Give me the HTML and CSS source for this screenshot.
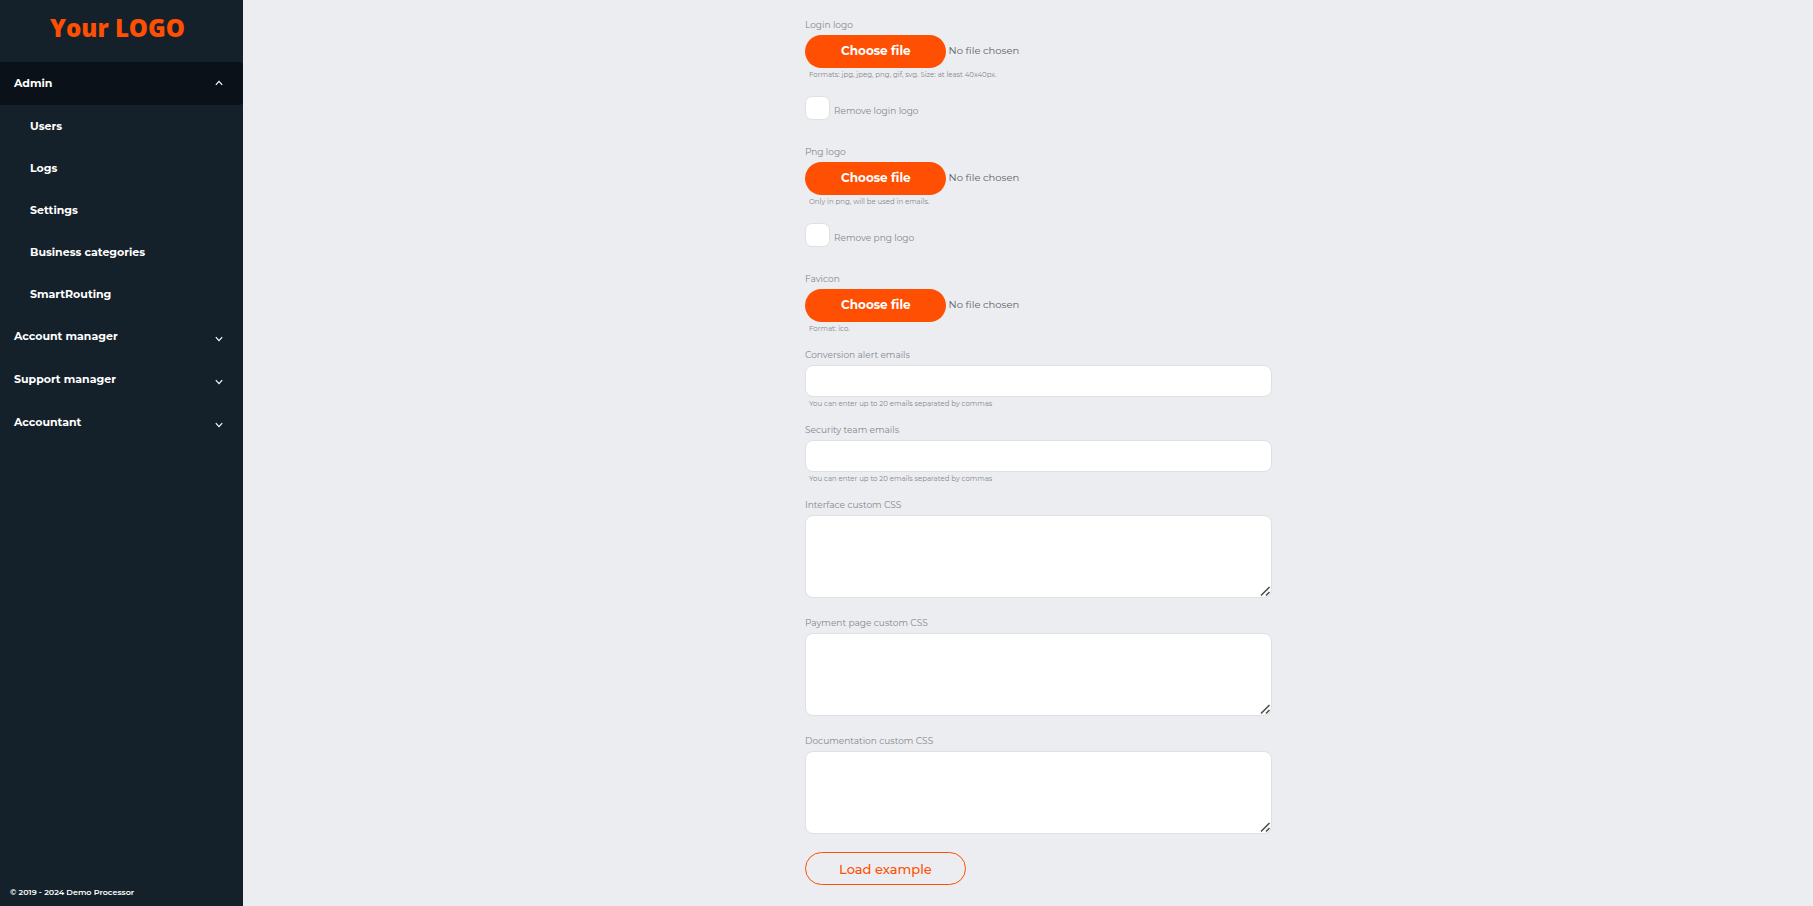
FILE: index.html
```html
<!DOCTYPE html>
<html lang="en">
<head>
    <meta charset="UTF-8">
    <meta name="viewport" content="width=device-width, initial-scale=1.0">
    <title>Settings</title>
    <link rel="stylesheet" href="styles.css">
</head>
<body>
    <aside class="sidebar">
        <a href="#" class="logo">Your LOGO</a>
        <nav class="menu">
            <button type="button" class="menu-item active" aria-expanded="true">
                Admin
                <svg class="chevron" viewBox="0 0 8 6"><path d="M0.8 4.8 L4 1.4 L7.2 4.8"/></svg>
            </button>
            <div class="submenu">
                <a href="#">Users</a>
                <a href="#">Logs</a>
                <a href="#">Settings</a>
                <a href="#">Business categories</a>
                <a href="#">SmartRouting</a>
            </div>
            <button type="button" class="menu-item" aria-expanded="false">
                Account manager
                <svg class="chevron down" viewBox="0 0 8 6"><path d="M0.8 1.2 L4 4.6 L7.2 1.2"/></svg>
            </button>
            <button type="button" class="menu-item" aria-expanded="false">
                Support manager
                <svg class="chevron down" viewBox="0 0 8 6"><path d="M0.8 1.2 L4 4.6 L7.2 1.2"/></svg>
            </button>
            <button type="button" class="menu-item" aria-expanded="false">
                Accountant
                <svg class="chevron down" viewBox="0 0 8 6"><path d="M0.8 1.2 L4 4.6 L7.2 1.2"/></svg>
            </button>
        </nav>
        <footer class="copyright">© 2019 - 2024 Demo Processor</footer>
    </aside>

    <main class="content">
        <form class="settings-form">
            <div class="field">
                <label for="login-logo">Login logo</label>
                <div class="file">
                    <input type="file" id="login-logo" accept=".jpg,.jpeg,.png,.gif,.svg">
                    <label for="login-logo" class="btn">Choose file</label>
                    <span class="file-name">No file chosen</span>
                </div>
                <p class="hint">Formats: jpg, jpeg, png, gif, svg. Size: at least 40x40px.</p>
            </div>
            <div class="check">
                <input type="checkbox" id="remove-login-logo">
                <label for="remove-login-logo">Remove login logo</label>
            </div>

            <div class="field">
                <label for="png-logo">Png logo</label>
                <div class="file">
                    <input type="file" id="png-logo" accept=".png">
                    <label for="png-logo" class="btn">Choose file</label>
                    <span class="file-name">No file chosen</span>
                </div>
                <p class="hint">Only in png, will be used in emails.</p>
            </div>
            <div class="check">
                <input type="checkbox" id="remove-png-logo">
                <label for="remove-png-logo">Remove png logo</label>
            </div>

            <div class="field">
                <label for="favicon">Favicon</label>
                <div class="file">
                    <input type="file" id="favicon" accept=".ico">
                    <label for="favicon" class="btn">Choose file</label>
                    <span class="file-name">No file chosen</span>
                </div>
                <p class="hint">Format: ico.</p>
            </div>

            <div class="field">
                <label for="alert-emails">Conversion alert emails</label>
                <input type="text" id="alert-emails">
                <p class="hint">You can enter up to 20 emails separated by commas</p>
            </div>
            <div class="field">
                <label for="security-emails">Security team emails</label>
                <input type="text" id="security-emails">
                <p class="hint">You can enter up to 20 emails separated by commas</p>
            </div>

            <div class="field">
                <label for="interface-css">Interface custom CSS</label>
                <textarea id="interface-css"></textarea>
            </div>
            <div class="field">
                <label for="payment-css">Payment page custom CSS</label>
                <textarea id="payment-css"></textarea>
            </div>
            <div class="field">
                <label for="docs-css">Documentation custom CSS</label>
                <textarea id="docs-css"></textarea>
            </div>

            <button type="button" class="btn btn-outline">Load example</button>
        </form>
    </main>

    <script>
        document.querySelectorAll('.file input').forEach((input) => {
            input.addEventListener('change', () => {
                const name = input.parentElement.querySelector('.file-name');
                name.textContent = input.files.length ? input.files[0].name : 'No file chosen';
            });
        });
    </script>
</body>
</html>
```
FILE: styles.css
```css
* {
    box-sizing: border-box;
}

body {
    display: flex;
    min-height: 100vh;
    margin: 0;
    background-color: #ecedf1;
    font-family: Montserrat, Inter, sans-serif;
    color: #85878c;
}

.sidebar {
    display: flex;
    flex-direction: column;
    flex: none;
    width: 243px;
    background-color: #14212b;
    color: #fff;
}

.logo {
    padding-right: 8px;
    height: 62px;
    color: #ff4f02;
    font-family: "Open Sans", sans-serif;
    font-size: 24px;
    font-weight: 800;
    line-height: 56px;
    text-align: center;
    text-decoration: none;
}

.menu {
    flex: 1;
}

.menu-item {
    display: flex;
    align-items: center;
    justify-content: space-between;
    width: 100%;
    height: 43px;
    padding: 0 20px 2px 14px;
    background: none;
    border: none;
    border-radius: 0 4px 4px 0;
    color: #fff;
    font-family: inherit;
    font-size: 11px;
    font-weight: 700;
    cursor: pointer;
}

.menu-item.active {
    background-color: #0a1118;
}

.chevron {
    width: 8px;
    height: 6px;
    fill: none;
    stroke: #fff;
    stroke-width: 1.2;
}

.chevron.down {
    margin-top: 6px;
}

.submenu a {
    display: block;
    padding-left: 30px;
    color: #fff;
    font-size: 11px;
    font-weight: 700;
    line-height: 42px;
    text-decoration: none;
}

.copyright {
    padding: 0 10px 6px;
    font-size: 8px;
    font-weight: 600;
    line-height: 16px;
}

.content {
    flex: 1;
    padding: 17px 0 20px 21px;
}

.settings-form {
    max-width: 467px;
    margin: 0 auto;
}

.field {
    margin-bottom: 12px;
}

.field > label {
    display: block;
    margin-bottom: 2px;
    font-size: 9px;
    line-height: 16px;
}

.field input[type="text"],
.field textarea {
    display: block;
    width: 100%;
    height: 32px;
    padding: 6px 10px;
    background-color: #fff;
    border: 1px solid #dfe0e2;
    border-radius: 8px;
    font-family: inherit;
    font-size: 11px;
}

.field textarea {
    height: 83px;
    margin-bottom: 17px;
    resize: both;
}

.field textarea::-webkit-resizer {
    background: url("data:image/svg+xml,%3Csvg xmlns='http://www.w3.org/2000/svg' width='15' height='15' fill='none' stroke='%23505050' stroke-width='1.6'%3E%3Cpath d='M5 13.5L13.5 5M10 13.5L13.5 10'/%3E%3C/svg%3E") no-repeat right bottom;
}

.hint {
    margin: 0;
    padding-left: 4px;
    font-size: 7px;
    line-height: 13px;
}

.file {
    display: flex;
    align-items: center;
    gap: 3px;
}

.file input {
    position: absolute;
    width: 1px;
    height: 1px;
    opacity: 0;
}

.file-name {
    padding-bottom: 2px;
    color: #5d6068;
    font-size: 10px;
}

.btn {
    height: 33px;
    padding: 0 35px 0 36px;
    background-color: #ff4f02;
    border-radius: 17px;
    color: #fff;
    font-family: inherit;
    font-size: 12px;
    font-weight: 700;
    line-height: 31px;
    cursor: pointer;
}

.btn-outline {
    margin-top: 1px;
    padding: 0 33px;
    background: none;
    border: 1px solid #ff4f02;
    color: #ff4f02;
    font-size: 13px;
    font-weight: 500;
    line-height: 28px;
}

.check {
    display: flex;
    align-items: center;
    gap: 4px;
    margin: 15px 0 24px;
}

.check input {
    appearance: none;
    width: 25px;
    height: 24px;
    margin: 0;
    background-color: #fff;
    border: 1px solid #dfe0e2;
    border-radius: 7px;
}

.check input:checked {
    background-color: #ff4f02;
}

.check label {
    padding-top: 5px;
    font-size: 9px;
}
```
